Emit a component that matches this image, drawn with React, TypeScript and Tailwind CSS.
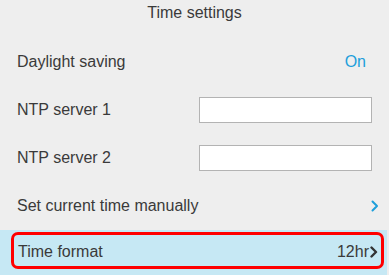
import React from "react";

function Chevron({ color, width = 2 }: { color: string; width?: number }) {
  return (
    <svg width="8" height="12" viewBox="0 0 8 12" className="block">
      <polyline points="1.5,1.5 6,6 1.5,10.5" fill="none" stroke={color} strokeWidth={width} strokeLinecap="round" strokeLinejoin="round" />
    </svg>
  );
}

export default function App() {
  return (
    <div
      className="w-[389px] h-[275px] overflow-hidden bg-[#eeeeee] text-[#3a3a3a] text-[16px] leading-[20px]"
      style={{ fontFamily: '"Liberation Sans", Arial, sans-serif' }}
    >
      <div className="h-[37px] pt-[3px] text-center">Time settings</div>
      <div className="h-[48px] flex items-center justify-between pl-[17px] pr-[23px] pt-[2px]">
        <span>Daylight saving</span>
        <span className="text-[#1d9fdb]">On</span>
      </div>
      <div className="h-[48px] flex items-center justify-between pl-[17px] pr-[17px] pt-[1px]">
        <span>NTP server 1</span>
        <div className="w-[173px] h-[26px] bg-white border border-[#b3b3b3]" />
      </div>
      <div className="h-[48px] flex items-center justify-between pl-[17px] pr-[17px] pt-[1px]">
        <span>NTP server 2</span>
        <div className="w-[173px] h-[26px] bg-white border border-[#b3b3b3]" />
      </div>
      <div className="h-[48px] flex items-center justify-between pl-[17px] pr-[10px] pt-[1px]">
        <span>Set current time manually</span>
        <Chevron color="#1d9fdb" />
      </div>
      <div className="mt-[1px] w-[387px] h-[48px] bg-[#c6e8f4] pt-[2px] pl-[11px]">
        <div className="w-[373px] h-[37px] border-[3px] border-[#ff0000] rounded-[7px] flex items-center justify-between pl-[4px] pr-[3px] pt-[2px]">
          <span>Time format</span>
          <span className="flex items-center gap-[1px]">
            <span>12hr</span>
            <Chevron color="#333333" width={2.4} />
          </span>
        </div>
      </div>
    </div>
  );
}
